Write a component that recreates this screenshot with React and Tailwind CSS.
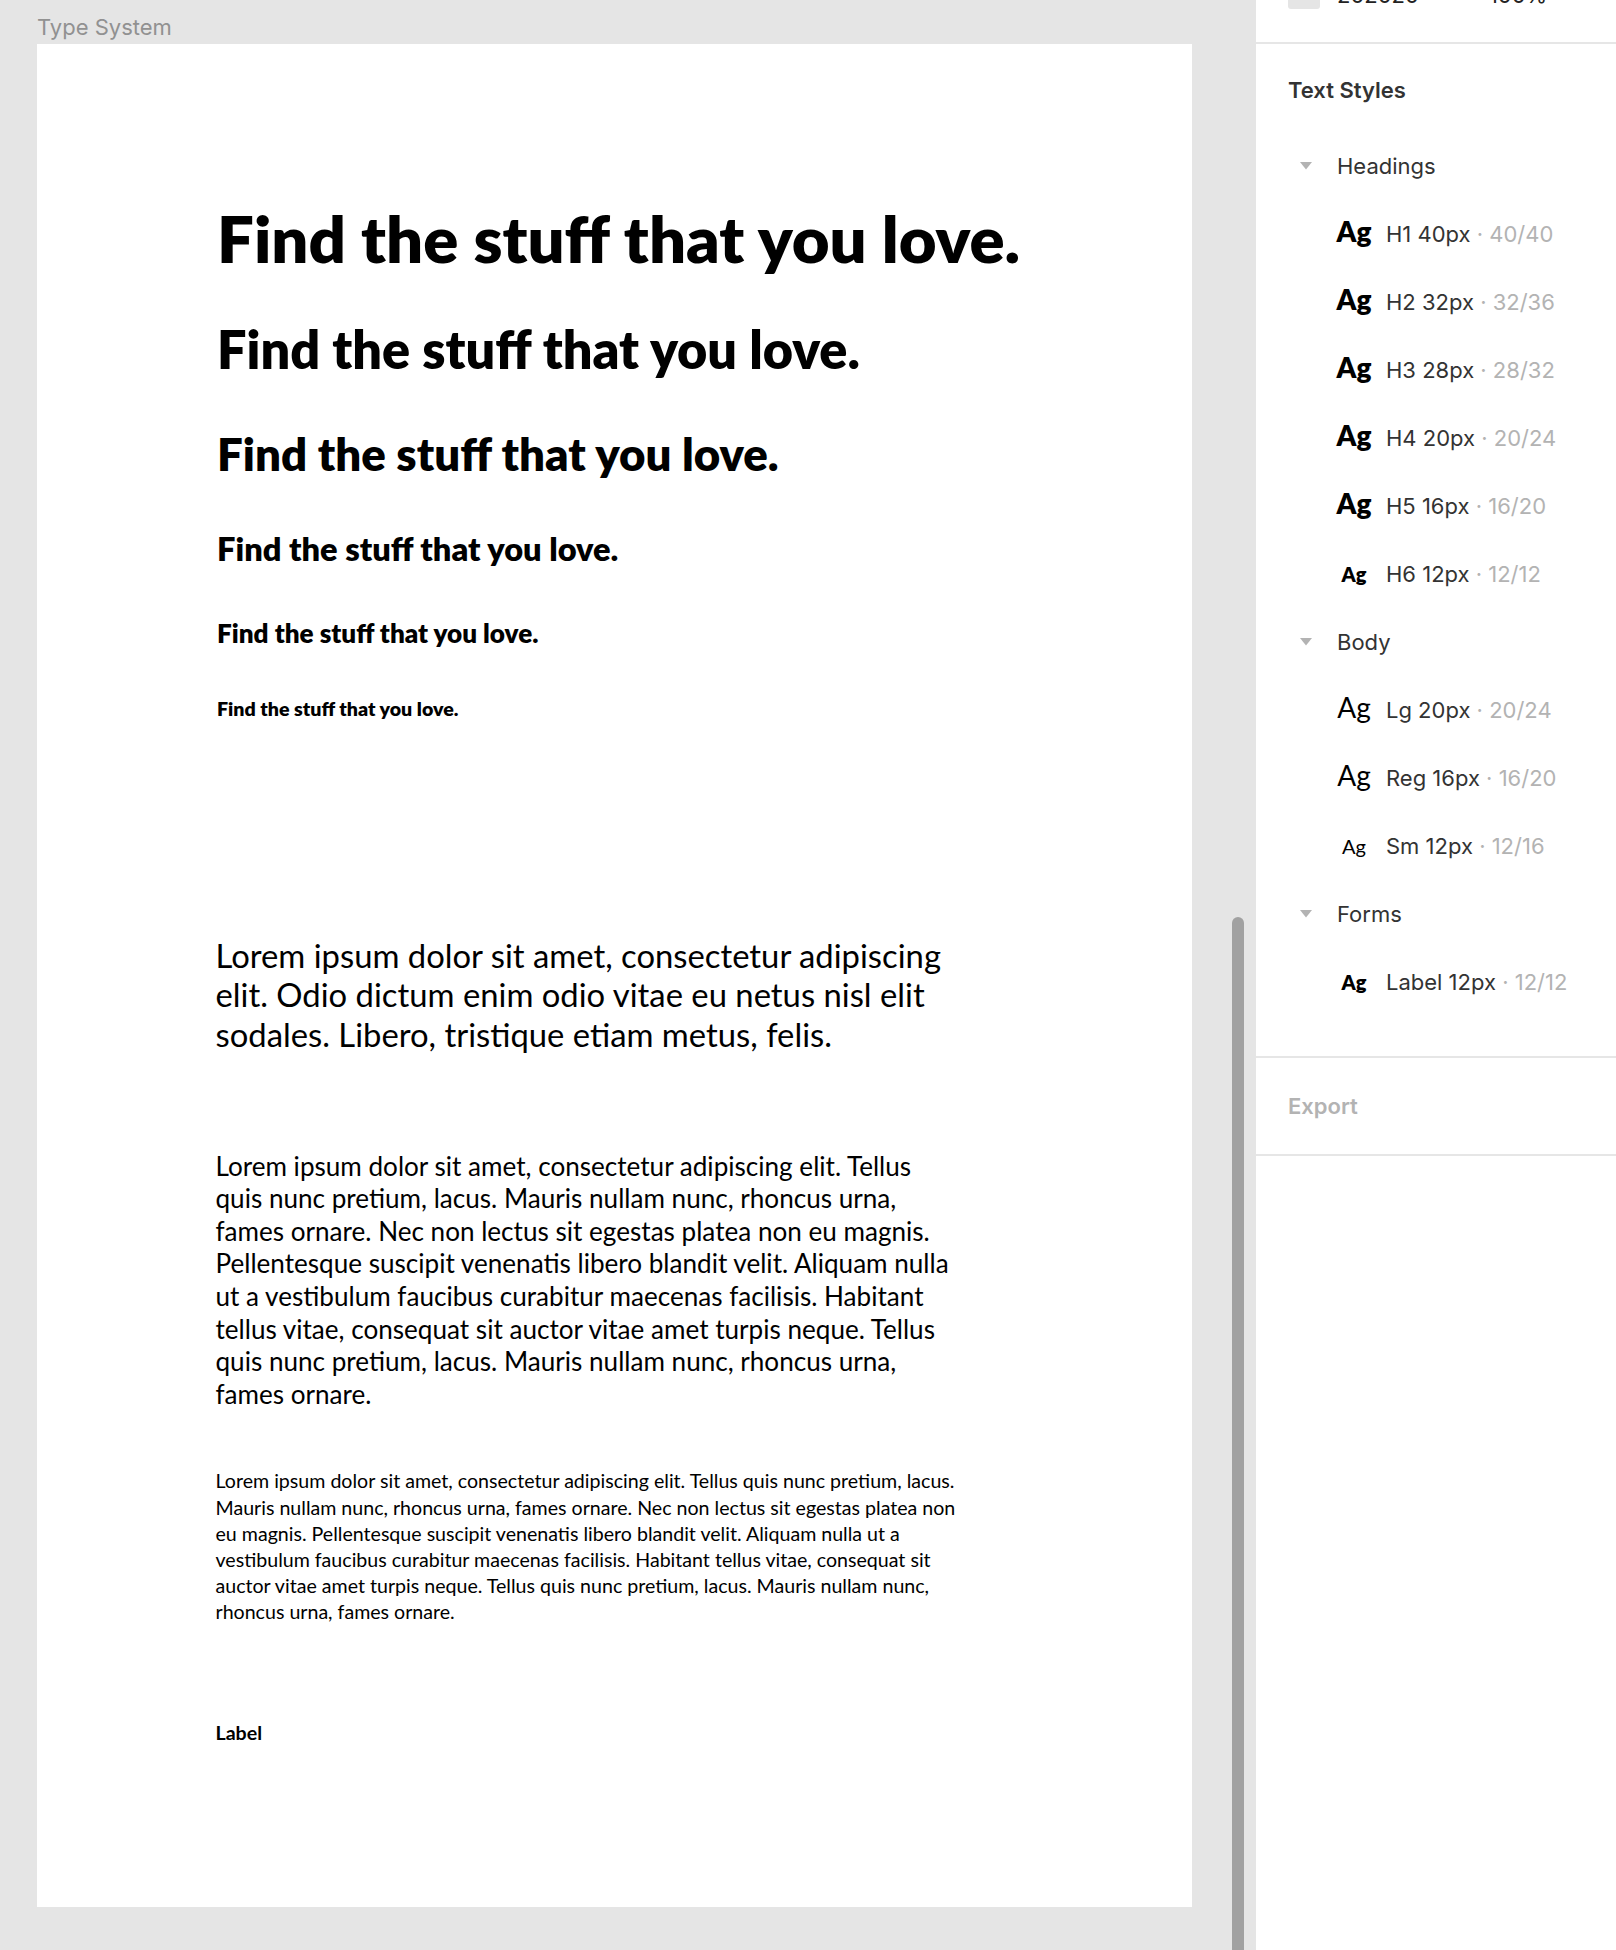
import React from "react";

const sections = [
  {
    name: "Headings",
    items: [
      { ag: "hb", label: "H1 40px", meta: "40/40" },
      { ag: "hb", label: "H2 32px", meta: "32/36" },
      { ag: "hb", label: "H3 28px", meta: "28/32" },
      { ag: "hb", label: "H4 20px", meta: "20/24" },
      { ag: "hb", label: "H5 16px", meta: "16/20" },
      { ag: "sb", label: "H6 12px", meta: "12/12" },
    ],
  },
  {
    name: "Body",
    items: [
      { ag: "hr", label: "Lg 20px", meta: "20/24" },
      { ag: "hr", label: "Reg 16px", meta: "16/20" },
      { ag: "sr", label: "Sm 12px", meta: "12/16" },
    ],
  },
  {
    name: "Forms",
    items: [{ ag: "sb", label: "Label 12px", meta: "12/12" }],
  },
];

function Ag({ kind }) {
  const cls = {
    hb: "text-[28px] font-extrabold",
    sb: "text-[20px] font-extrabold",
    hr: "text-[28px] font-normal",
    sr: "text-[20px] font-normal",
  }[kind];
  return (
    <span
      className={
        "inline-block w-[40px] text-center leading-none text-black [font-family:Lato,sans-serif] " +
        cls
      }
    >
      Ag
    </span>
  );
}

function Caret() {
  return (
    <svg width="12" height="8" viewBox="0 0 12 8" className="shrink-0">
      <path d="M0 0 L12 0 L6 7.5 Z" fill="#b3b3b3" />
    </svg>
  );
}

const lg = [
  "Lorem ipsum dolor sit amet, consectetur adipiscing",
  "elit. Odio dictum enim odio vitae eu netus nisl elit",
  "sodales. Libero, tristique etiam metus, felis.",
];
const reg = [
  "Lorem ipsum dolor sit amet, consectetur adipiscing elit. Tellus",
  "quis nunc pretium, lacus. Mauris nullam nunc, rhoncus urna,",
  "fames ornare. Nec non lectus sit egestas platea non eu magnis.",
  "Pellentesque suscipit venenatis libero blandit velit. Aliquam nulla",
  "ut a vestibulum faucibus curabitur maecenas facilisis. Habitant",
  "tellus vitae, consequat sit auctor vitae amet turpis neque. Tellus",
  "quis nunc pretium, lacus. Mauris nullam nunc, rhoncus urna,",
  "fames ornare.",
];
const sm = [
  "Lorem ipsum dolor sit amet, consectetur adipiscing elit. Tellus quis nunc pretium, lacus.",
  "Mauris nullam nunc, rhoncus urna, fames ornare. Nec non lectus sit egestas platea non",
  "eu magnis. Pellentesque suscipit venenatis libero blandit velit. Aliquam nulla ut a",
  "vestibulum faucibus curabitur maecenas facilisis. Habitant tellus vitae, consequat sit",
  "auctor vitae amet turpis neque. Tellus quis nunc pretium, lacus. Mauris nullam nunc,",
  "rhoncus urna, fames ornare.",
];

const heading = "Find the stuff that you love.";

export default function App() {
  return (
    <div className="flex h-[1950px] w-[1616px] overflow-hidden bg-[#e5e5e5]">
      {/* Canvas area */}
      <div className="w-[1192px] shrink-0 pl-[37px]">
        <div className="h-[44px] pt-[14px] text-[22px] leading-[26px] text-[#919191] [font-family:Inter,sans-serif]">
          Type System
        </div>
        <div className="h-[1863px] w-[1155px] bg-white pl-[180px] pt-[162px] text-black [font-family:Lato,sans-serif] whitespace-nowrap">
          <h1 className="text-[65.2px] leading-[65.2px] font-extrabold">{heading}</h1>
          <h2 className="mt-[49px] text-[52.2px] leading-[58.7px] font-extrabold">{heading}</h2>
          <h3 className="mt-[49px] text-[45.6px] leading-[52.2px] font-extrabold">{heading}</h3>
          <h4 className="mt-[49px] text-[32.6px] leading-[39.1px] font-extrabold">{heading}</h4>
          <h5 className="mt-[49px] text-[26.1px] leading-[32.6px] font-extrabold">{heading}</h5>
          <h6 className="mt-[49px] text-[19.6px] leading-[19.6px] font-extrabold">{heading}</h6>
          <div className="-ml-[1.5px]">
            <p className="mt-[218px] text-[32.8px] leading-[39.1px]">
              {lg.map((l, i) => (
                <span key={i} className="block">{l}</span>
              ))}
            </p>
            <p className="mt-[96px] text-[26.1px] leading-[32.6px]">
              {reg.map((l, i) => (
                <span key={i} className="block">{l}</span>
              ))}
            </p>
            <p className="mt-[58px] text-[19.6px] leading-[26.1px]">
              {sm.map((l, i) => (
                <span key={i} className="block">{l}</span>
              ))}
            </p>
            <p className="mt-[98px] text-[19.6px] leading-[19.6px] font-bold">Label</p>
          </div>
        </div>
      </div>

      {/* Scrollbar */}
      <div className="flex w-[64px] shrink-0 flex-col pl-[40px] pt-[917px]">
        <div className="w-[12px] flex-1 rounded-t-full bg-[#a1a1a1]" />
      </div>

      {/* Sidebar */}
      <div className="w-[360px] shrink-0 bg-white text-[22px] text-[#333] [font-family:Inter,sans-serif]">
        <div className="h-[42px] overflow-hidden">
          <div className="-mt-[23px] flex items-start pl-[32px]">
            <div className="h-[32px] w-[32px] rounded-[3px] bg-[#e5e5e5]" />
            <span className="ml-[17px] mt-[5px] leading-[26px] text-[#222]">202020</span>
            <span className="ml-[70px] mt-[5px] leading-[26px] text-[#222]">100%</span>
          </div>
        </div>
        <div className="h-[2px] bg-[#e6e6e6]" />

        <div className="pt-[12px]">
          <div className="pl-[32px] font-semibold leading-[68px]">Text Styles</div>
          <div className="pt-[8px]">
            {sections.map((s) => (
              <div key={s.name}>
                <div className="flex h-[68px] items-center pl-[44px]">
                  <Caret />
                  <span className="ml-[25px] leading-[26px]">{s.name}</span>
                </div>
                {s.items.map((it) => (
                  <div
                    key={it.label}
                    className="h-[68px] whitespace-nowrap pl-[78px] leading-[68px]"
                  >
                    <Ag kind={it.ag} />
                    <span className="ml-[12px]">{it.label}</span>
                    <span className="text-[#b3b3b3]"> · {it.meta}</span>
                  </div>
                ))}
              </div>
            ))}
          </div>
        </div>

        <div className="mt-[40px] h-[2px] bg-[#e6e6e6]" />
        <div className="flex h-[96px] items-center pl-[32px] font-semibold text-[#b3b3b3]">
          Export
        </div>
        <div className="h-[2px] bg-[#e6e6e6]" />
      </div>
    </div>
  );
}
